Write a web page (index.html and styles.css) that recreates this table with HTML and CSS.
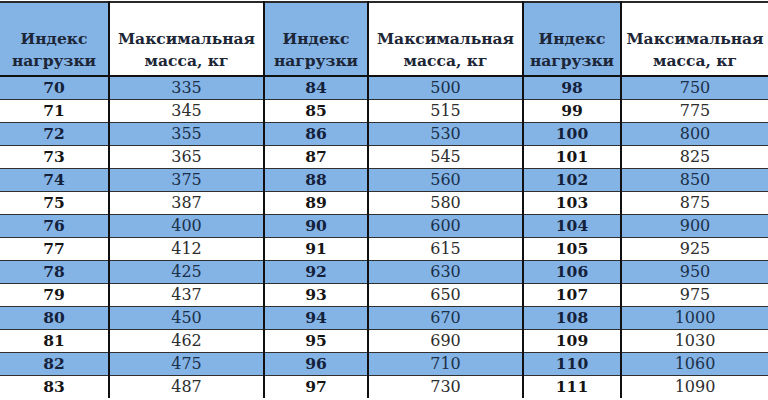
FILE: index.html
```html
<!DOCTYPE html>
<html>
<head>
<meta charset="utf-8">
<link rel="stylesheet" href="styles.css">
</head>
<body>
<table class="load">
<colgroup>
<col class="c-idx1"><col class="c-mass1"><col class="c-idx2"><col class="c-mass2"><col class="c-idx3"><col class="c-mass3">
</colgroup>
<thead>
<tr>
<th class="idx">Индекс<br>нагрузки</th><th class="mass">Максимальная<br>масса, кг</th>
<th class="idx">Индекс<br>нагрузки</th><th class="mass">Максимальная<br>масса, кг</th>
<th class="idx">Индекс<br>нагрузки</th><th class="mass">Максимальная<br>масса, кг</th>
</tr>
</thead>
<tbody>
<tr class="blue"><td class="i">70</td><td>335</td><td class="i">84</td><td>500</td><td class="i">98</td><td>750</td></tr>
<tr><td class="i">71</td><td>345</td><td class="i">85</td><td>515</td><td class="i">99</td><td>775</td></tr>
<tr class="blue"><td class="i">72</td><td>355</td><td class="i">86</td><td>530</td><td class="i">100</td><td>800</td></tr>
<tr><td class="i">73</td><td>365</td><td class="i">87</td><td>545</td><td class="i">101</td><td>825</td></tr>
<tr class="blue"><td class="i">74</td><td>375</td><td class="i">88</td><td>560</td><td class="i">102</td><td>850</td></tr>
<tr><td class="i">75</td><td>387</td><td class="i">89</td><td>580</td><td class="i">103</td><td>875</td></tr>
<tr class="blue"><td class="i">76</td><td>400</td><td class="i">90</td><td>600</td><td class="i">104</td><td>900</td></tr>
<tr><td class="i">77</td><td>412</td><td class="i">91</td><td>615</td><td class="i">105</td><td>925</td></tr>
<tr class="blue"><td class="i">78</td><td>425</td><td class="i">92</td><td>630</td><td class="i">106</td><td>950</td></tr>
<tr><td class="i">79</td><td>437</td><td class="i">93</td><td>650</td><td class="i">107</td><td>975</td></tr>
<tr class="blue"><td class="i">80</td><td>450</td><td class="i">94</td><td>670</td><td class="i">108</td><td>1000</td></tr>
<tr><td class="i">81</td><td>462</td><td class="i">95</td><td>690</td><td class="i">109</td><td>1030</td></tr>
<tr class="blue"><td class="i">82</td><td>475</td><td class="i">96</td><td>710</td><td class="i">110</td><td>1060</td></tr>
<tr><td class="i">83</td><td>487</td><td class="i">97</td><td>730</td><td class="i">111</td><td>1090</td></tr>
</tbody>
</table>
</body>
</html>
```
FILE: styles.css
```css
html, body {
  margin: 0;
  padding: 0;
  background: #ffffff;
}
body {
  padding-top: 1px;
  font-family: "DejaVu Serif", "Liberation Serif", serif;
}
.load {
  width: 768px;
  border-collapse: collapse;
  table-layout: fixed;
  border-top: 2px solid #2a2a2a;
}
.c-idx1 { width: 109px; }
.c-mass1 { width: 155px; }
.c-idx2 { width: 104px; }
.c-mass2 { width: 155px; }
.c-idx3 { width: 98px; }
.c-mass3 { width: 147px; }

th {
  height: 69px;
  padding: 0 0 3px 0;
  vertical-align: bottom;
  font-weight: bold;
  font-size: 15.5px;
  line-height: 22px;
  color: #1c2636;
  border-left: 2px solid #101010;
  border-bottom: 2px solid #101010;
}
th:first-child { border-left: none; }
th.idx { background: #84b3e6; }
th.mass { background: #ffffff; }

td {
  height: 22px;
  padding: 0;
  text-align: center;
  font-size: 16px;
  line-height: 22px;
  color: #2d2d2d;
  border-left: 2px solid #101010;
  border-top: 1px solid #303030;
}
td:first-child { border-left: none; }
tr:first-child td { border-top: none; }
td.i {
  font-weight: bold;
  font-size: 15.5px;
  color: #151515;
}
tr.blue td { background: #84b3e6; color: #1b3048; }
tr.blue td.i { color: #14213a; }
```
